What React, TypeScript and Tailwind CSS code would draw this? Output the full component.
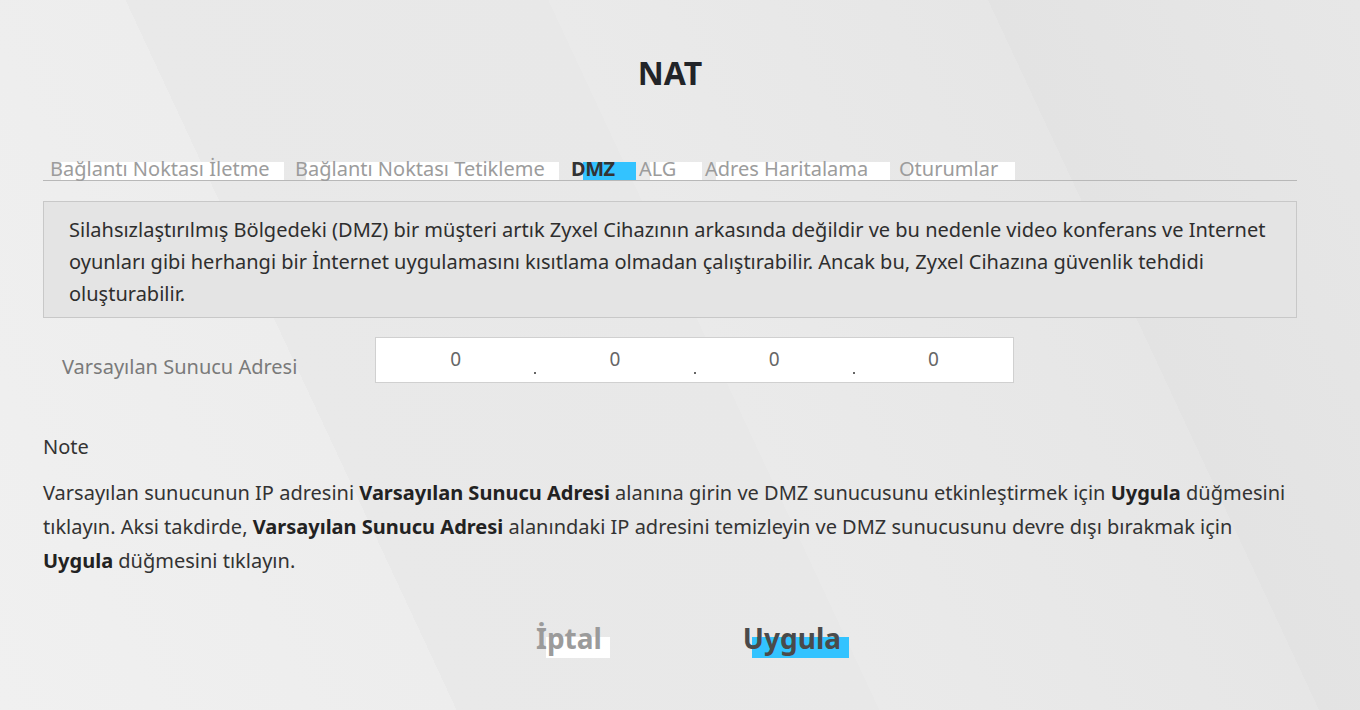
import React from "react";

type Tab = { label: string; w: string; ml: string; active?: boolean };

const tabs: Tab[] = [
  { label: "Bağlantı Noktası İletme", w: "w-[234px]", ml: "ml-[7px]" },
  { label: "Bağlantı Noktası Tetikleme", w: "w-[264px]", ml: "ml-[11px]" },
  { label: "DMZ", w: "w-[65px]", ml: "ml-[12px]", active: true },
  { label: "ALG", w: "w-[63px]", ml: "ml-[3px]" },
  { label: "Adres Haritalama", w: "w-[185px]", ml: "ml-[3px]" },
  { label: "Oturumlar", w: "w-[116px]", ml: "ml-[9px]" },
];

function TabItem({ t }: { t: Tab }) {
  return (
    <div className={`relative h-[24px] ${t.w} ${t.ml} shrink-0`}>
      <span
        className={`absolute top-[6px] bottom-0 right-0 ${t.active ? "left-[12px] bg-[#33c3ff]" : "left-[11px] bg-white"}`}
      />
      <span
        className={`relative z-10 whitespace-nowrap text-[20px] leading-[26px] ${
          t.active ? "font-bold text-[#333333] tracking-[-0.5px]" : "text-[#9c9c9c]"
        }`}
      >
        {t.label}
      </span>
    </div>
  );
}

function Octet({ last }: { last?: boolean }) {
  return (
    <div className="relative flex h-full items-center justify-center pb-[2px] text-[19px] text-[#666666]">
      0
      {!last && <span className="absolute right-[-1px] top-[34px] h-[2px] w-[2px] bg-[#666666]" />}
    </div>
  );
}

export default function App() {
  return (
    <div
      className="min-h-screen w-full bg-[linear-gradient(65deg,#f0f0f0_0%,#ededed_27%,#e9e9e9_27%,#e8e8e8_52%,#eaeaea_52%,#e6e6e6_78%,#e3e3e3_78%,#e7e7e7_100%)] font-['Noto_Sans',sans-serif] text-[#333333]"
    >
      <div className="ml-[43px] w-[1254px] pt-[53px] pb-[50px]">
        <h1 className="text-center text-[32px] font-bold leading-[40px] text-[#222428]">NAT</h1>

        <div className="mt-[63px] flex border-b border-[#b8b8b8]">
          {tabs.map((t) => (
            <TabItem key={t.label} t={t} />
          ))}
        </div>

        <div className="mt-[20px] border border-[#c8c8c8] bg-[#e4e4e4] pt-[12px] pb-[7px] pl-[25px] pr-[18px] text-[20px] leading-[32px] text-[#2e2e2e]">
          Silahsızlaştırılmış Bölgedeki (DMZ) bir müşteri artık Zyxel Cihazının arkasında değildir ve bu nedenle video
          konferans ve Internet oyunları gibi herhangi bir İnternet uygulamasını kısıtlama olmadan çalıştırabilir. Ancak
          bu, Zyxel Cihazına güvenlik tehdidi oluşturabilir.
        </div>

        <div className="mt-[19px] flex">
          <div className="w-[332px] shrink-0 pl-[19px] pt-[18px] text-[20px] leading-[24px] text-[#7a7a7a]">
            Varsayılan Sunucu Adresi
          </div>
          <div className="grid h-[46px] w-[639px] grid-cols-4 border border-[#d0d0d0] bg-white">
            <Octet />
            <Octet />
            <Octet />
            <Octet last />
          </div>
        </div>

        <div className="mt-[48px] text-[20px] leading-[32px] text-[#333333]">Note</div>
        <p className="mt-[13px] text-[20px] leading-[34px] text-[#333333]">
          Varsayılan sunucunun IP adresini <b className="text-[#222222]">Varsayılan Sunucu Adresi</b> alanına girin ve
          DMZ sunucusunu etkinleştirmek için <b className="text-[#222222]">Uygula</b> düğmesini tıklayın. Aksi takdirde,{" "}
          <b className="text-[#222222]">Varsayılan Sunucu Adresi</b> alanındaki IP adresini temizleyin ve DMZ
          sunucusunu devre dışı bırakmak için <b className="text-[#222222]">Uygula</b> düğmesini tıklayın.
        </p>

        <div className="mt-[39px] flex justify-center pl-[45px]">
          <button className="relative h-[41px] pr-[8px] text-left">
            <span className="absolute left-[10px] right-0 top-[20px] bottom-0 bg-white" />
            <span className="relative z-10 text-[28px] font-bold leading-[36px] text-[#9b9b9b]">İptal</span>
          </button>
          <button className="relative ml-[133px] h-[41px] pr-[8px] text-left">
            <span className="absolute left-[9px] right-0 top-[20px] bottom-0 bg-[#33c3ff]" />
            <span className="relative z-10 text-[28px] font-bold leading-[36px] text-[#4a4a4a]">Uygula</span>
          </button>
        </div>
      </div>
    </div>
  );
}
